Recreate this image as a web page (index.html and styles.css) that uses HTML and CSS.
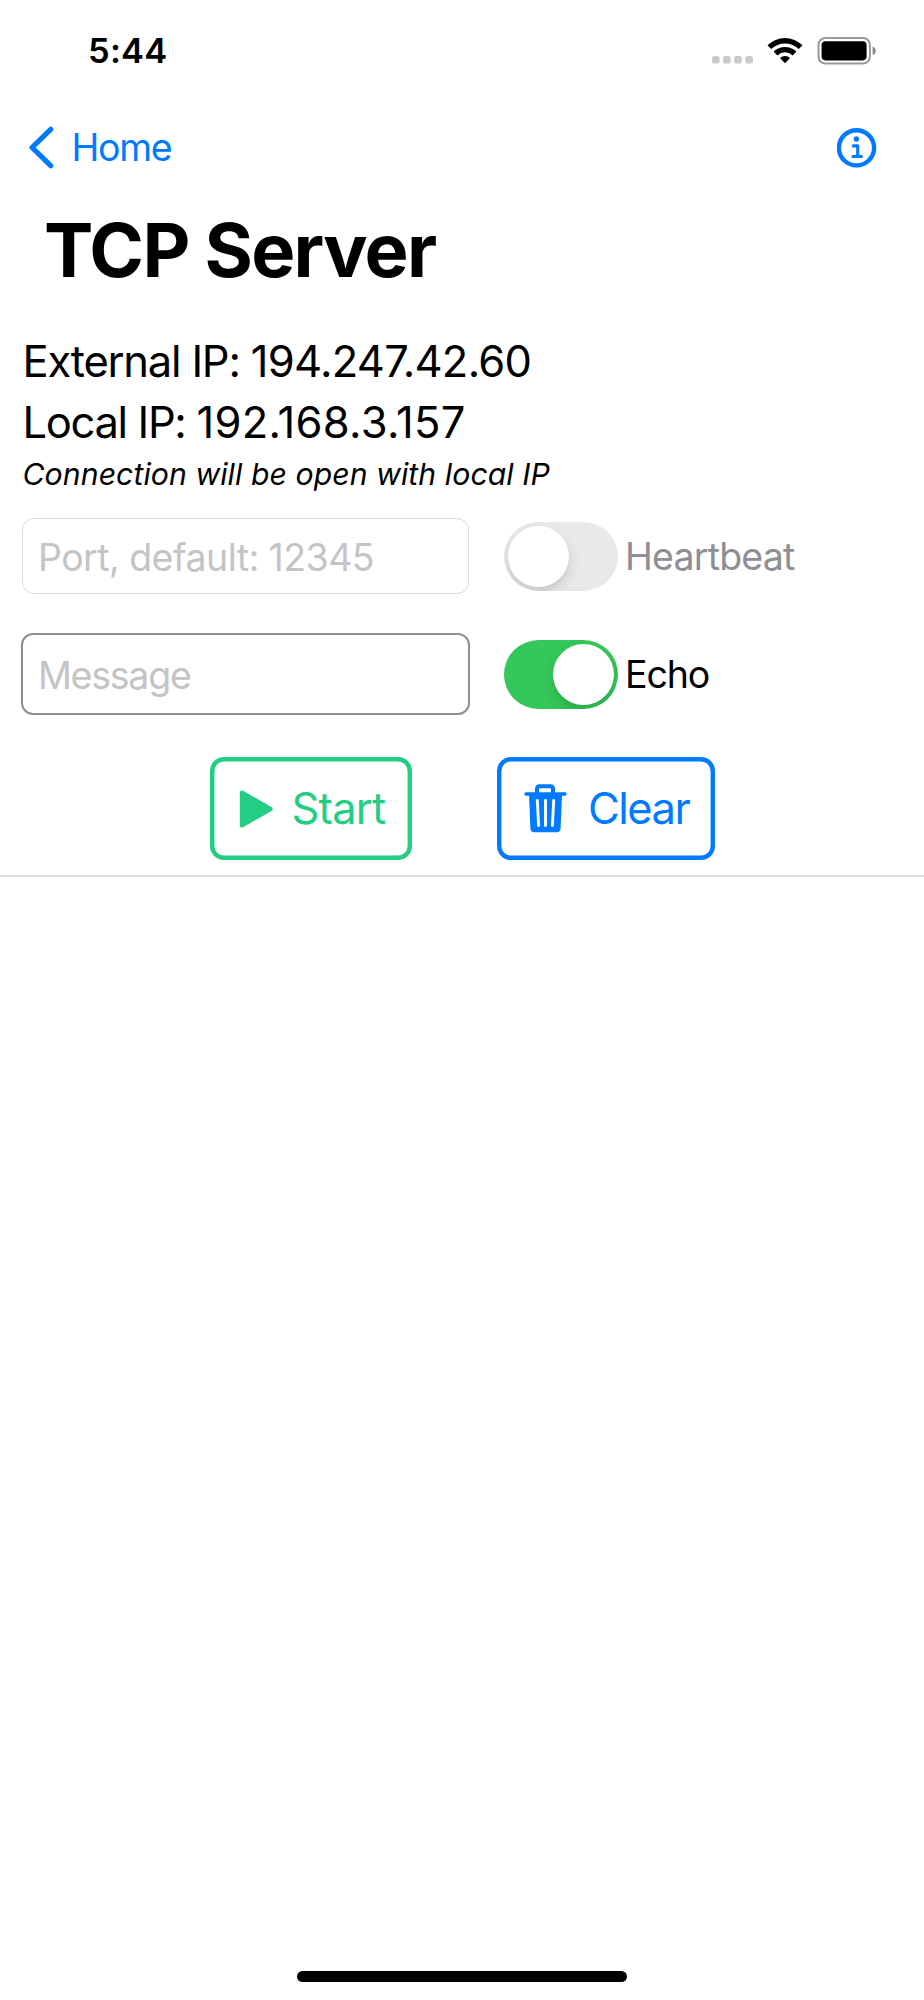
FILE: index.html
```html
<!DOCTYPE html>
<html lang="en">
<head>
<meta charset="utf-8">
<title>TCP Server</title>
<link rel="stylesheet" href="styles.css">
</head>
<body>
<div class="screen">
  <header class="status">
    <span class="time">5:44</span>
    <div class="indicators">
      <svg class="dots" width="41" height="8" viewBox="0 0 41 8"><g fill="#cacaca"><rect width="7.6" height="7.6" rx="2.2"/><rect x="11" width="7.6" height="7.6" rx="2.2"/><rect x="22.2" width="7.6" height="7.6" rx="2.2"/><rect x="33.3" width="7.6" height="7.6" rx="2.2"/></g></svg>
      <svg class="wifi" width="36" height="28" viewBox="0 0 36 28"><path d="M.5 8.2A25 25 0 0 1 35.5 8.2L31.8 12A20 20 0 0 0 4.2 12ZM6.6 14.6A16.3 16.3 0 0 1 29.4 14.6L25.6 18.4A11 11 0 0 0 10.4 18.4ZM13 20.9A7.4 7.4 0 0 1 23 20.9L18.5 25.8Q18 26.4 17.5 25.8Z"/></svg>
      <svg class="battery" width="60" height="28" viewBox="0 0 60 28"><rect x="1.5" y="1" width="51.4" height="25.6" rx="7" fill="none" stroke="#999" stroke-width="2"/><rect x="4.6" y="4.2" width="45" height="19.2" rx="3.8"/><path d="M55.6 9.4Q58.8 10.7 58.8 13.7T55.6 18.1Z" fill="#888"/></svg>
    </div>
  </header>
  <nav class="nav">
    <a class="back"><svg width="27" height="44" viewBox="0 0 27 44"><path d="M22.7 3.3 4 21.5 22.7 39.7" fill="none" stroke="#007aff" stroke-width="5.2" stroke-linecap="round" stroke-linejoin="round"/></svg><span class="back-label">Home</span></a>
    <svg class="info" width="40" height="40" viewBox="0 0 40 40" fill="none" stroke="#007aff"><circle cx="19.5" cy="19.8" r="17.6" stroke-width="4.4"/><circle cx="19.4" cy="11" r="2.7" fill="#007aff" stroke="none"/><path d="M16.3 17.9h4.4v10.6M15.9 28.5h8.6" stroke-width="3.1" stroke-linecap="round" stroke-linejoin="round"/></svg>
  </nav>
  <h1 class="title"><span>TCP Server</span></h1>
  <section class="addresses">
    <p class="address external">External IP: <span class="ip">194.247.42.60</span></p>
    <p class="address local">Local IP: <span class="ip">192.168.3.157</span></p>
    <p class="note">Connection will be open with local IP</p>
  </section>
  <section class="form">
    <div class="row">
      <div class="field port"><span>Port, default: 12345</span></div>
      <div class="switch"><i class="knob"></i></div>
      <span class="label heartbeat">Heartbeat</span>
    </div>
    <div class="row">
      <div class="field message"><span>Message</span></div>
      <div class="switch on"><i class="knob"></i></div>
      <span class="label echo">Echo</span>
    </div>
  </section>
  <section class="actions">
    <div class="button start"><svg width="36" height="40" viewBox="0 0 36 40"><path d="M3 3.7 31.4 20 3 36.3Z" fill="#23ce84" stroke="#23ce84" stroke-width="4.4" stroke-linejoin="round"/></svg><span>Start</span></div>
    <div class="button clear"><svg width="43" height="49" viewBox="0 0 43 49"><path d="M13 9V5Q13 2.3 15.7 2.3H26.3Q29 2.3 29 5V9" fill="none" stroke="#007aff" stroke-width="4"/><path d="M2 10H41" stroke="#007aff" stroke-width="3.4" stroke-linecap="round"/><path d="M5 10H38L36.6 44.6Q36.4 48.3 32.8 48.3H10.2Q6.6 48.3 6.4 44.6Z" fill="#007aff"/><path d="M13.3 16.5 14.6 41.5M21.5 16.5V41.5M29.7 16.5 28.4 41.5" stroke="#fff" stroke-width="2.9" stroke-linecap="round"/></svg><span>Clear</span></div>
  </section>
  <main class="log"></main>
  <div class="home-bar"></div>
</div>
</body>
</html>
```
FILE: styles.css
```css
* { box-sizing: border-box; }
body { margin: 0; background: #fff; color: #000; font-family: Inter, "Liberation Sans", sans-serif; }
p, h1 { margin: 0; }
svg { display: block; flex: none; }
span, p { white-space: nowrap; }
.screen { width: 924px; height: 2000px; display: flex; flex-direction: column; overflow: hidden; }
.status { height: 102px; padding: 0 47px 0 88px; display: flex; justify-content: space-between; align-items: center; }
.time { font-size: 34.5px; font-weight: 600; line-height: 40px; letter-spacing: .2px; }
.indicators { display: flex; align-items: flex-end; height: 28px; }
.dots { margin: 0 14px 1.5px 0; }
.wifi { margin-right: 14px; }
.nav { height: 91px; padding: 0 47px 0 28px; display: flex; justify-content: space-between; align-items: center; }
.back { display: flex; align-items: center; color: #007aff; font-size: 37.5px; line-height: 46px; letter-spacing: -1.3px; }
.back-label { margin-left: 16.5px; }
.title { height: 114px; padding-left: 44px; font-size: 74px; font-weight: 700; line-height: 114px; letter-spacing: -1.7px; }
.addresses { padding: 24px 0 0 22.5px; }
.address { font-size: 43.5px; line-height: 60.5px; letter-spacing: -1.22px; }
.external .ip { letter-spacing: -.72px; }
.local { letter-spacing: -1.35px; }
.local .ip { letter-spacing: .3px; }
.note { font-size: 30.2px; font-style: italic; line-height: 44px; letter-spacing: .07px; }
.form { padding: 22px 0 0 21px; display: flex; flex-direction: column; gap: 39px; }
.row { display: flex; align-items: center; }
.field { display: flex; align-items: center; color: #c4c4c6; font-size: 37.5px; width: 449px; padding: 2px 0 0 15px; border-radius: 12px; }
.port { width: 447px; margin: 0 1px; height: 76px; letter-spacing: -.57px; border: 1px solid #dcdcde; }
.message { height: 82px; letter-spacing: -1.25px; border: 2px solid #8e8e93; }
.switch { width: 114px; height: 69px; margin-left: 34px; padding: 4px; border-radius: 35px; background: #e9e9eb; display: flex; overflow: hidden; }
.switch.on { background: #34c759; justify-content: flex-end; }
.knob { width: 61px; height: 61px; border-radius: 50%; background: #fff; box-shadow: 0 6px 14px rgba(0, 0, 0, .12), 0 5px 2px rgba(0, 0, 0, .03); }
.label { margin-left: 7px; padding-top: 2px; font-size: 37.5px; line-height: 46px; }
.heartbeat { color: #8e8e93; letter-spacing: -.8px; }
.echo { letter-spacing: -1.1px; }
.actions { display: flex; padding: 42px 0 0 210px; height: 162px; gap: 85px; border-bottom: 2px solid #dcdcdc; }
.button { display: flex; align-items: center; height: 103px; box-shadow: inset 0 0 0 4.4px currentColor; border-radius: 14px; font-size: 43.5px; }
.button span { padding-bottom: 2px; }
.start { width: 202px; padding-left: 29px; color: #23ce84; }
.start span { margin-left: 16.5px; letter-spacing: -.85px; }
.clear { width: 218px; padding-left: 27px; color: #007aff; }
.clear span { margin-left: 21px; letter-spacing: -1.5px; }
.log { flex: 1; }
.home-bar { width: 330px; height: 11px; margin: 0 auto 18px; border-radius: 6px; background: #000; }
```
